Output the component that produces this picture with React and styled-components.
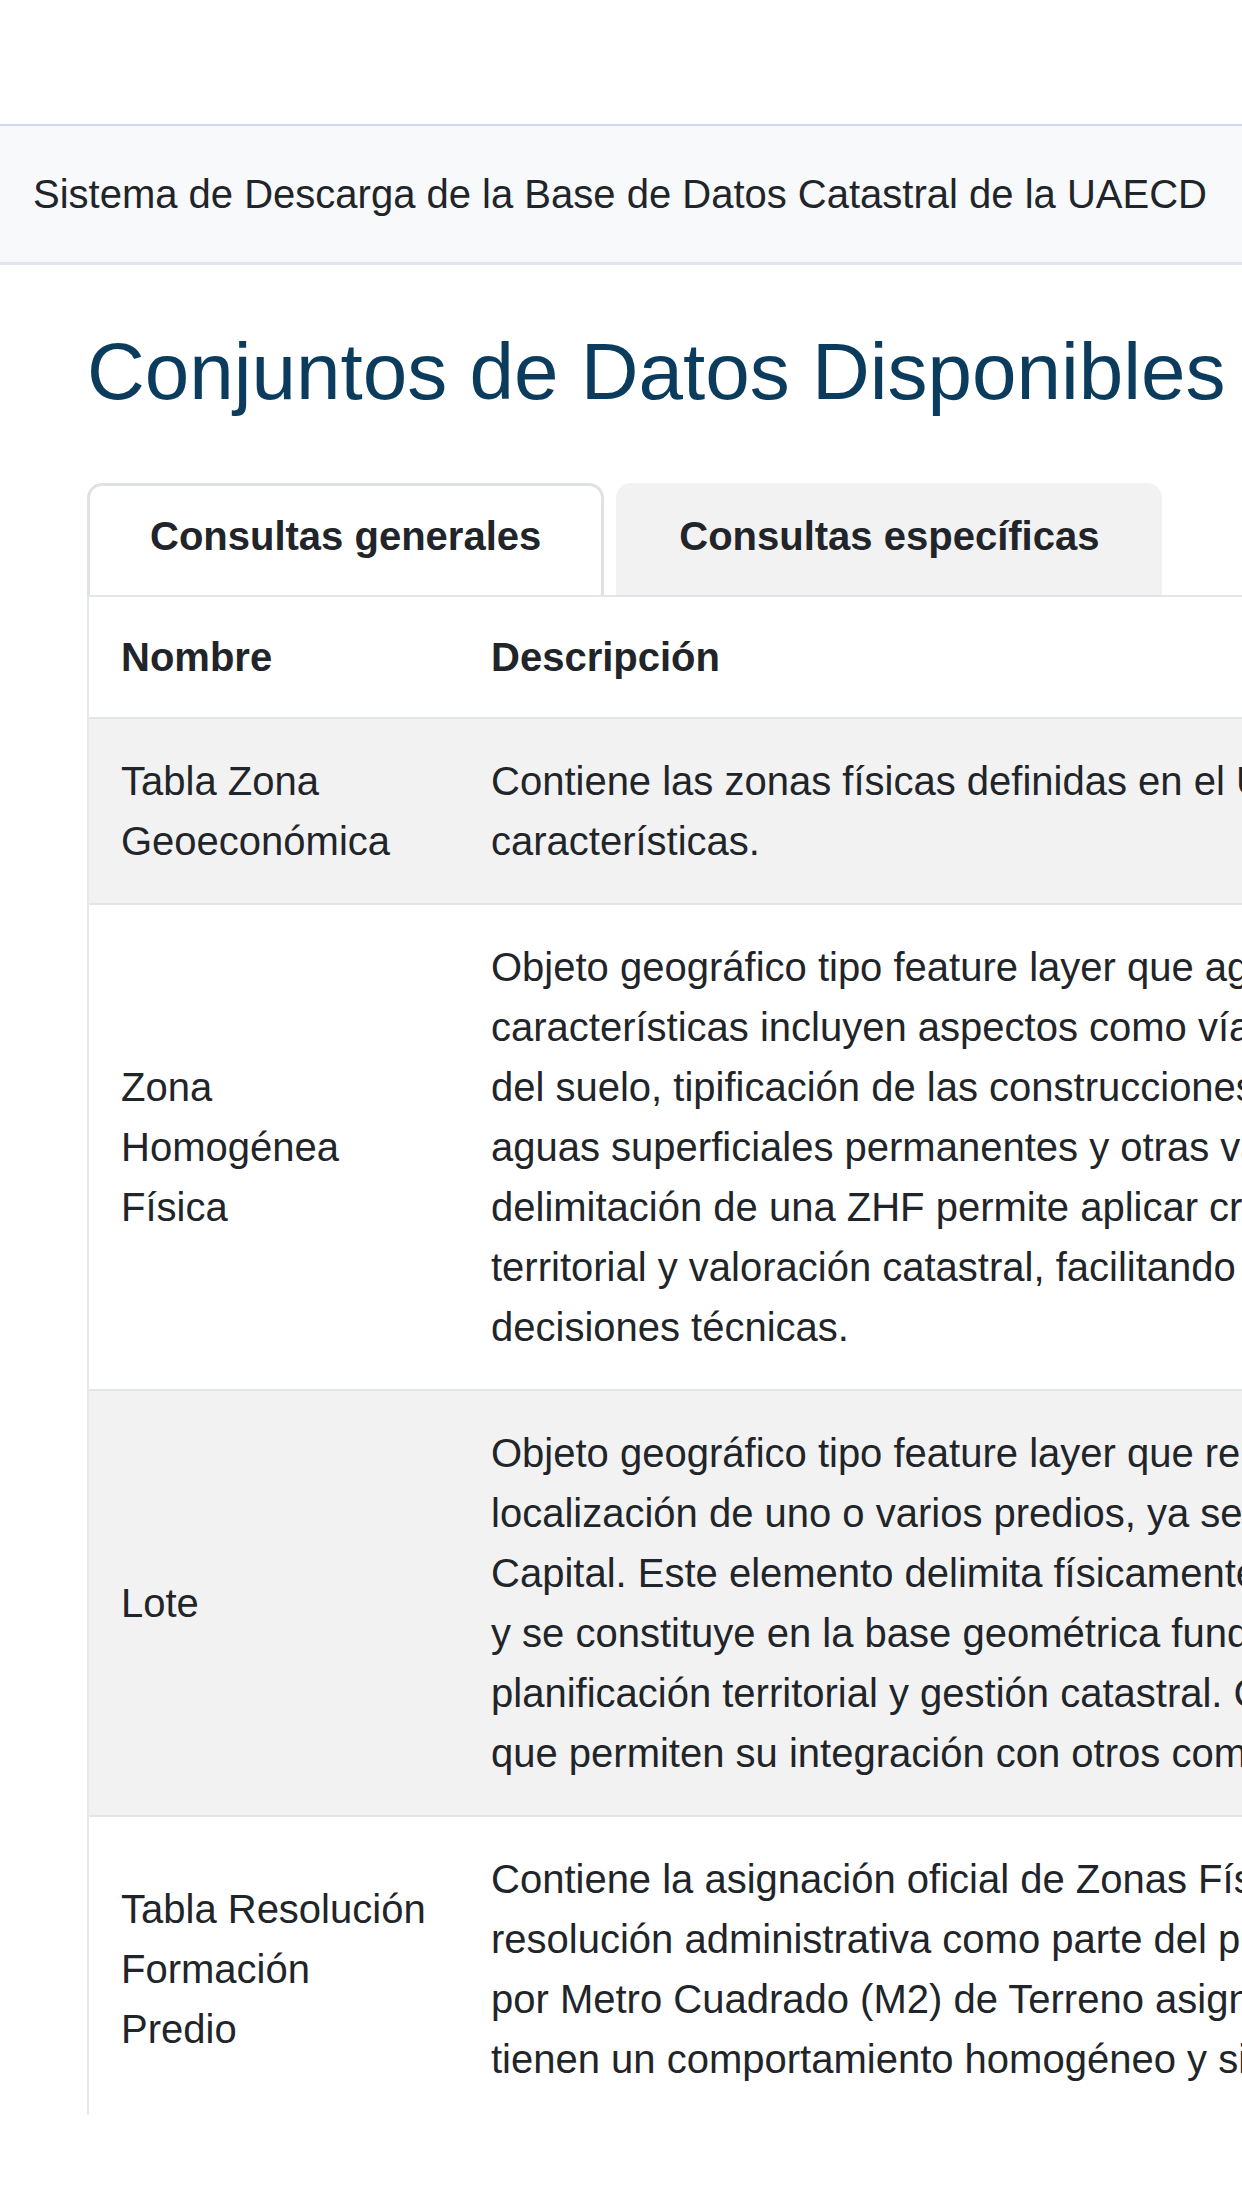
import React from 'react';
import styled, { createGlobalStyle } from 'styled-components';

const rows = [
  {
    name: 'Tabla Zona Geoeconómica',
    lines: [
      'Contiene las zonas físicas definidas en el Universo catastral del Distrito y sus',
      'características.',
    ],
  },
  {
    name: 'Zona Homogénea Física',
    lines: [
      'Objeto geográfico tipo feature layer que agrupa áreas del territorio urbano cuyas',
      'características incluyen aspectos como vías, topografía, servicios públicos, uso',
      'del suelo, tipificación de las construcciones o edificaciones, áreas de tierra,',
      'aguas superficiales permanentes y otras variables que permiten diferenciarlas. La',
      'delimitación de una ZHF permite aplicar criterios uniformes para la planificación',
      'territorial y valoración catastral, facilitando el análisis espacial y la toma de',
      'decisiones técnicas.',
    ],
  },
  {
    name: 'Lote',
    lines: [
      'Objeto geográfico tipo feature layer que representa la unidad física que contiene la',
      'localización de uno o varios predios, ya sea en suelo urbano o rural del Distrito',
      'Capital. Este elemento delimita físicamente el terreno sobre el cual se asientan',
      'y se constituye en la base geométrica fundamental para procesos de',
      'planificación territorial y gestión catastral. Contiene atributos e identificadores',
      'que permiten su integración con otros componentes del sistema.',
    ],
  },
  {
    name: 'Tabla Resolución Formación Predio',
    lines: [
      'Contiene la asignación oficial de Zonas Físicas y Geoeconómicas establecida mediante',
      'resolución administrativa como parte del proceso de formación catastral, con el valor',
      'por Metro Cuadrado (M2) de Terreno asignado a cada zona, en las cuales los predios',
      'tienen un comportamiento homogéneo y similar.',
    ],
  },
];

export default function App() {
  return (
    <>
      <GlobalStyle />
      <Page>
        <TopBar>Sistema de Descarga de la Base de Datos Catastral de la UAECD</TopBar>
        <Main>
          <Title>Conjuntos de Datos Disponibles</Title>
          <Tabs>
            <Tab $active>Consultas generales</Tab>
            <Tab>Consultas específicas</Tab>
          </Tabs>
          <TableWrap>
            <Table>
              <colgroup>
                <col style={{ width: 370 }} />
                <col style={{ width: 1700 }} />
              </colgroup>
              <thead>
                <tr>
                  <Th>Nombre</Th>
                  <Th>Descripción</Th>
                </tr>
              </thead>
              <tbody>
                {rows.map((row, i) => (
                  <Row key={row.name} $striped={i % 2 === 0}>
                    <NameCell>{row.name}</NameCell>
                    <DescCell>
                      {row.lines.map((line, j) => (
                        <React.Fragment key={j}>
                          {line}
                          {j < row.lines.length - 1 && <br />}
                        </React.Fragment>
                      ))}
                    </DescCell>
                  </Row>
                ))}
              </tbody>
            </Table>
          </TableWrap>
        </Main>
      </Page>
    </>
  );
}

const GlobalStyle = createGlobalStyle`
  html, body {
    margin: 0;
    padding: 0;
    background: #fff;
  }

  body {
    font-family: "Liberation Sans", Arial, sans-serif;
    font-size: 40px;
    line-height: 60px;
    color: #212529;
    overflow: hidden;
  }
`;

const Page = styled.div`
  padding-top: 124px;
  width: 1242px;
  overflow: hidden;
`;

const TopBar = styled.header`
  background: #f8f9fa;
  border-top: 2px solid #cdd8ea;
  border-bottom: 3px solid #e1e4e8;
  padding: 38px 0 38px 33px;
  white-space: nowrap;
  color: #212529;
`;

const Main = styled.main`
  padding-left: 87px;
`;

const Title = styled.h1`
  margin: 59px 0 0;
  font-size: 80px;
  line-height: 96px;
  font-weight: 400;
  color: #0b3c5d;
  white-space: nowrap;
`;

const Tabs = styled.nav`
  display: flex;
  gap: 12px;
  margin-top: 63px;
`;

const Tab = styled.button`
  font-family: inherit;
  font-size: 40px;
  line-height: 60px;
  font-weight: 700;
  color: #212529;
  white-space: nowrap;
  padding: 20px 60px 29px;
  border: 3px solid ${(p) => (p.$active ? '#dfe2e5' : 'transparent')};
  border-bottom: none;
  border-radius: 15px 15px 0 0;
  background: ${(p) => (p.$active ? '#fff' : '#f2f2f2')};
  cursor: pointer;
`;

const TableWrap = styled.div`
  max-height: 1518px;
  overflow: hidden;
  border-top: 2px solid #e2e5e9;
  border-left: 2px solid #e6e8eb;
`;

const Table = styled.table`
  table-layout: fixed;
  border-collapse: separate;
  border-spacing: 0;
  width: 2070px;
`;

const Th = styled.th`
  text-align: left;
  font-weight: 700;
  padding: 30px 24px 30px 32px;
  border-bottom: 2px solid #e2e5e9;
  white-space: nowrap;
`;

const Row = styled.tr`
  background: ${(p) => (p.$striped ? '#f2f2f2' : '#fff')};

  td {
    border-bottom: 2px solid #e2e5e9;
    vertical-align: middle;
  }
`;

const NameCell = styled.td`
  padding: 32px 24px 32px 32px;
`;

const DescCell = styled.td`
  padding: 32px;
  white-space: nowrap;
`;
